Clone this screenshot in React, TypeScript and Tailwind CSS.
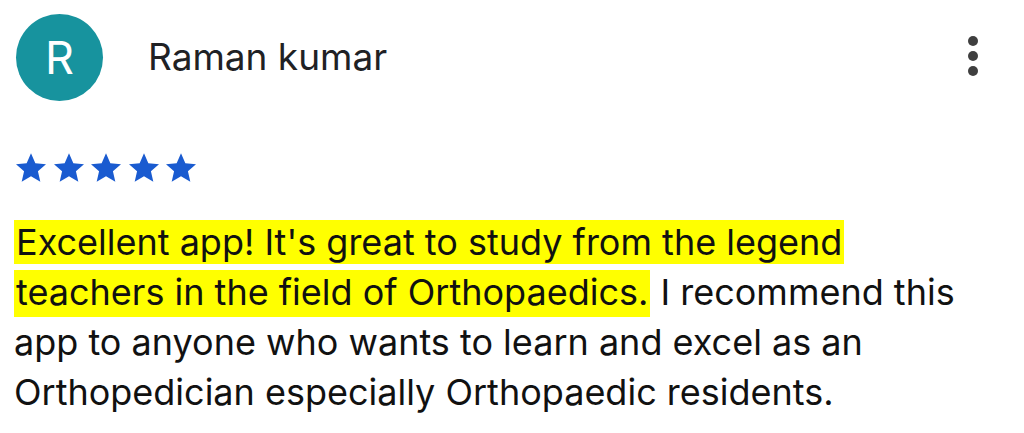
import React from "react";

function Star() {
  return (
    <svg width="30" height="29" viewBox="1.5 1.8 21 20" className="block">
      <path
        d="M12 1.8l3.05 6.95 7.45.7-5.65 4.95 1.68 7.35L12 17.9l-6.53 3.85 1.68-7.35L1.5 9.45l7.45-.7z"
        fill="#1a5bd0"
      />
    </svg>
  );
}

export default function App() {
  return (
    <div
      className="w-[1024px] h-[433px] bg-white overflow-hidden"
      style={{ fontFamily: "Inter, 'Noto Sans', sans-serif" }}
    >
      <div className="flex items-center pl-4 pt-[14px] pr-[46px]">
        <div className="w-[87px] h-[87px] rounded-full bg-[#17939e] flex items-center justify-center text-white text-[45px] leading-none font-normal">
          R
        </div>
        <div className="ml-[45px] text-[37px] text-[#202124] leading-none -mt-[2px]">Raman kumar</div>
        <div className="ml-auto flex flex-col gap-[5px] -mt-[3px]">
          <span className="block w-[10px] h-[10px] rounded-full bg-[#3f3f3f]" />
          <span className="block w-[10px] h-[10px] rounded-full bg-[#3f3f3f]" />
          <span className="block w-[10px] h-[10px] rounded-full bg-[#3f3f3f]" />
        </div>
      </div>
      <div className="flex gap-[7.5px] pl-[16px] mt-[52px]">
        <Star />
        <Star />
        <Star />
        <Star />
        <Star />
      </div>
      <p className="pl-[14px] w-[1000px] mt-[35px] text-[36px] leading-[50px] text-[#111]">
        <span className="bg-[#ffff00] px-[2px]">Excellent app! It's great to study from the legend</span>{" "}
        <span className="bg-[#ffff00] px-[2px] pb-[3px]">teachers in the field of Orthopaedics.</span>{" "}
        I recommend this app to anyone who wants to learn and excel as an Orthopedician especially Orthopaedic
        residents.
      </p>
    </div>
  );
}
